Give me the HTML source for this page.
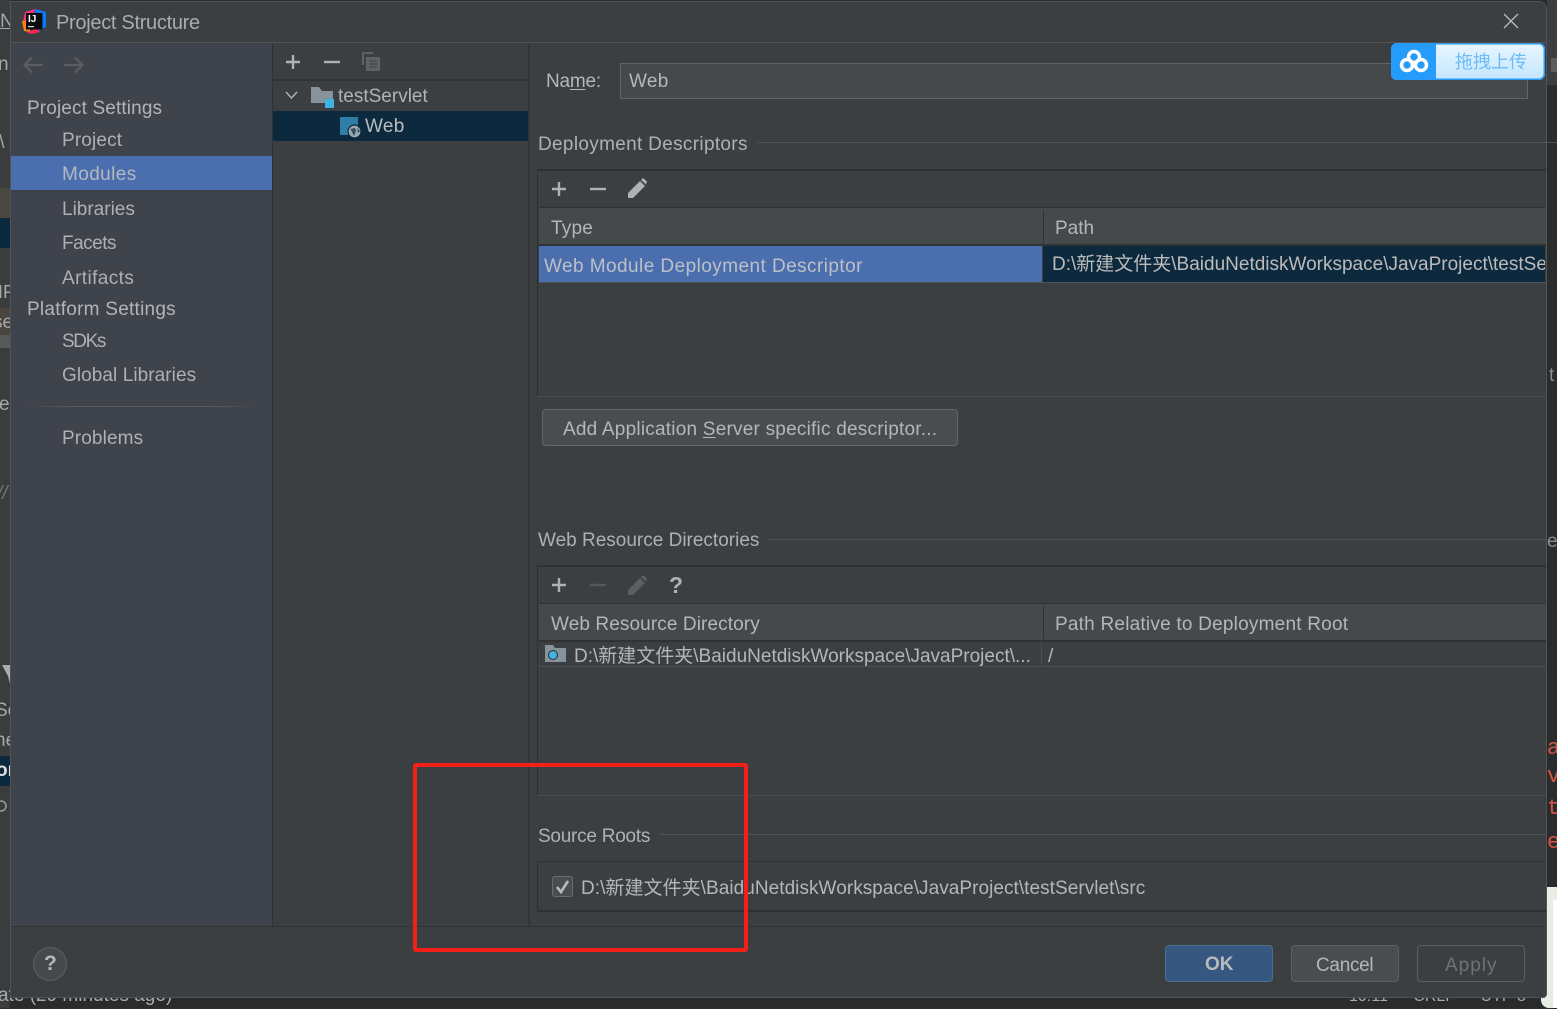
<!DOCTYPE html>
<html><head><meta charset="utf-8"><style>
html,body{margin:0;padding:0}
body{width:1557px;height:1008px;overflow:hidden;background:#2b2b2b;position:relative;font-family:"Liberation Sans","Noto Sans CJK SC",sans-serif;color:#bbb}
.a,.t{position:absolute}
.t{white-space:nowrap;font-size:19px;line-height:24px;color:#b4b6b8}
.c{width:10px;overflow:hidden;left:0;color:#a5a7a9}
svg{position:absolute;overflow:visible}
u{text-underline-offset:2px}
</style></head><body>
<div class="a" style="left:0;top:0;width:10px;height:1008px;background:#3a3c3e"></div>
<div class="a" style="left:0;top:188px;width:10px;height:30px;background:#4b463f"></div>
<div class="a" style="left:0;top:218px;width:10px;height:30px;background:#0d293e"></div>
<div class="a" style="left:0;top:308px;width:10px;height:30px;background:#4a453f"></div>
<div class="a" style="left:0;top:335px;width:10px;height:13px;background:#57595b"></div>
<div class="a" style="left:0;top:756px;width:10px;height:30px;background:#0d293e"></div>
<div class="t c" style="top:10px;text-decoration:underline">N</div>
<div class="t c" style="top:53px;text-indent:-2px">n</div>
<div class="t c" style="top:131px;text-indent:-6px">:\</div>
<div class="t c" style="top:280px;text-indent:-2px;font-size:18px">IF</div>
<div class="t c" style="top:311px;text-indent:-7px">se</div>
<div class="t c" style="top:393px;text-indent:-1px">e</div>
<div class="t c" style="top:482px;text-indent:-3px;font-style:italic;color:#777">//</div>
<svg style="left:0;top:664px" width="11" height="20"><path d="M2 1H10V20L8 12Z" fill="#a9abad"/></svg>
<div class="t c" style="top:699px;text-indent:-5px">Se</div>
<div class="t c" style="top:729px;text-indent:-5px">ne</div>
<div class="t c" style="top:759px;text-indent:-4px;font-weight:bold;color:#ddd">or</div>
<svg style="left:0;top:798px" width="10" height="16" fill="none"><circle cx="1" cy="8" r="5" stroke="#9a9c9e" stroke-width="1.500"/></svg>
<div class="t" style="left:-2px;top:984px;font-size:19px;color:#a9abae">ate (29 minutes ago)</div>
<div class="t" style="left:1349px;top:985px;font-size:16px;color:#a9abae;word-spacing:21px">10:11 CRLF UTF-8</div>

<div class="a" style="left:1547px;top:0;width:10px;height:1008px;background:#2a2b2c"></div>
<div class="a" style="left:1547px;top:0;width:10px;height:85px;background:#3c3f41"></div>
<div class="a" style="left:1551px;top:58px;width:6px;height:14px;background:#5b5d5f"></div>
<div class="a" style="left:1547px;top:142px;width:10px;height:1px;background:#4c4e50"></div>
<div class="t" style="left:1549px;top:364px;color:#8a8c8e">t</div>
<div class="t" style="left:1547px;top:530px;color:#8a8c8e">e</div>
<div class="t" style="left:1547px;top:737px;font:22px/24px 'Liberation Mono',monospace;color:#d9534a">a</div>
<div class="t" style="left:1547px;top:765px;font:22px/24px 'Liberation Mono',monospace;color:#d9534a">v</div>
<div class="t" style="left:1547px;top:797px;font:22px/24px 'Liberation Mono',monospace;color:#d9534a">t</div>
<div class="t" style="left:1547px;top:831px;font:22px/24px 'Liberation Mono',monospace;color:#d9534a">e</div>
<div class="a" style="left:1541px;top:887px;width:16px;height:121px;background:#e8ede6;border-radius:6px 0 0 8px"></div>
<div class="a" style="left:1553px;top:900px;width:4px;height:108px;background:#fff"></div>

<!-- dialog -->
<div class="a" style="left:10px;top:1px;width:1535px;height:995px;background:#3c3f41;border:1px solid #515355;border-radius:0 8px 4px 0"></div>
<div class="a" style="left:11px;top:42px;width:1535px;height:1px;background:#515355"></div>
<svg style="left:22px;top:8px" width="24" height="26" viewBox="0 0 24 26"><path d="M3 4 L13 1 L10 12 L1 14Z" fill="#f5317f"/><path d="M0 13 L8 12 L8 24 L2 23Z" fill="#fc801d"/><path d="M13 1 L24 4 L24 19 L14 24Z" fill="#087cfa"/><path d="M5 25 L14 20 L18 24 L10 26Z" fill="#fe2857"/><rect x="4" y="5" width="16.500" height="16.500" fill="#0b0b0b"/><text x="6" y="14" font-size="10" font-weight="bold" fill="#fff" font-family="Liberation Sans">IJ</text><rect x="6" y="18" width="6" height="1.200" fill="#ddd"/></svg>
<div class="t" style="left:56px;top:11px;font-size:20px;letter-spacing:-.3px;color:#a9abad">Project Structure</div>
<svg style="left:1503px;top:13px" width="16" height="16"><path d="M1 1L15 15M15 1L1 15" stroke="#bbb" stroke-width="1.3" fill="none"/></svg>

<!-- sidebar -->
<div class="a" style="left:11px;top:43px;width:261px;height:883px;background:#3f434c"></div>
<div class="a" style="left:272px;top:43px;width:1px;height:883px;background:#323232"></div>
<div class="a" style="left:528px;top:43px;width:2px;height:883px;background:#333537"></div>
<div class="a" style="left:273px;top:79px;width:255px;height:2px;background:#323232"></div>
<div class="a" style="left:11px;top:926px;width:1535px;height:1px;background:#303233"></div>
<svg style="left:23px;top:56px" width="70" height="18" fill="none" stroke="#5b5e60" stroke-width="2.2"><path d="M1 9H20M9 1.5L1.5 9L9 16.5"/><path d="M41 9H60M52 1.5L59.5 9L52 16.5"/></svg>
<div class="t" style="left:27px;top:97px;letter-spacing:.13px;color:#b2b4b6">Project Settings</div>
<div class="t" style="left:62px;top:129px;letter-spacing:.15px;color:#aeb0b2">Project</div>
<div class="a" style="left:11px;top:156px;width:261px;height:34px;background:#4b6eaf"></div>
<div class="t" style="left:62px;top:163px;letter-spacing:.4px;color:#b4b8c0">Modules</div>
<div class="t" style="left:62px;top:198px;color:#aeb0b2">Libraries</div>
<div class="t" style="left:62px;top:232px;letter-spacing:-.5px;color:#aeb0b2">Facets</div>
<div class="t" style="left:62px;top:267px;letter-spacing:.4px;color:#aeb0b2">Artifacts</div>
<div class="t" style="left:27px;top:298px;letter-spacing:.25px;color:#b2b4b6">Platform Settings</div>
<div class="t" style="left:62px;top:330px;letter-spacing:-1.4px;color:#aeb0b2">SDKs</div>
<div class="t" style="left:62px;top:364px;letter-spacing:.07px;color:#aeb0b2">Global Libraries</div>
<div class="a" style="left:27px;top:406px;width:230px;height:1px;background:linear-gradient(90deg,#3f434c,#5a5c5e 20%,#5a5c5e 80%,#3f434c)"></div>
<div class="t" style="left:62px;top:427px;letter-spacing:.12px;color:#aeb0b2">Problems</div>

<!-- tree -->
<svg style="left:285px;top:54px" width="105" height="18"><path d="M8 1V15M1 8H15" stroke="#afb1b3" stroke-width="2.4"/><path d="M39 8H55" stroke="#afb1b3" stroke-width="2.4"/><path d="M77 -2H88V0H79V11H77ZM81 3H95V17H81Z" fill="#5f6264"/><path d="M84 7H92M84 10H92M84 13H92" stroke="#3c3f41"/></svg>
<svg style="left:285px;top:91px" width="14" height="9" fill="none"><path d="M1 1L6.5 7L12 1" stroke="#a9abad" stroke-width="1.6"/></svg>
<svg style="left:311px;top:87px" width="24" height="22"><path d="M0 0H8L11 4H22V16H0Z" fill="#87939a"/><rect x="14" y="12" width="9" height="9" fill="#3fb2e3"/></svg>
<div class="t" style="left:338px;top:85px;color:#b0b2b4">testServlet</div>
<div class="a" style="left:273px;top:111px;width:255px;height:30px;background:#0d293e"></div>
<svg style="left:340px;top:117px" width="22" height="22"><rect width="18" height="18" fill="#2e7ea6"/><circle cx="14.500" cy="14.500" r="6.500" fill="#9aa7b0" stroke="#0d293e" stroke-width="1.200"/><path d="M10.500 12L15 11L16 14L14 19L12 15ZM17 11L20 14L18 16Z" fill="#33505f"/></svg>
<div class="t" style="left:365px;top:115px;letter-spacing:.3px;color:#b8bcc0">Web</div>

<!-- name -->
<div class="t" style="left:546px;top:70px;letter-spacing:-.2px">Na<u>m</u>e:</div>
<div class="a" style="left:620px;top:63px;width:906px;height:34px;background:#45494a;border:1px solid #646464"></div>
<div class="t" style="left:629px;top:70px;letter-spacing:.3px">Web</div>

<!-- deployment -->
<div class="t" style="left:538px;top:133px;letter-spacing:.32px;color:#aeb0b2">Deployment Descriptors</div>
<div class="a" style="left:757px;top:142px;width:789px;height:1px;background:#515355"></div>
<div class="a" style="left:537px;top:169px;width:1009px;height:228px;box-sizing:border-box;border:1px solid #2f3031;border-right:0;border-top-width:2px;border-bottom-color:#4a4c4e"></div>
<svg style="left:551px;top:178px" width="102" height="22"><path d="M8 4V18M1 11H15" stroke="#afb1b3" stroke-width="2.4"/><path d="M39 11H55" stroke="#afb1b3" stroke-width="2.4"/><path d="M77 20V15L89 3L94 8L82 20ZM90 2L92 0L96 3.500L95 6.500Z" fill="#afb1b3"/></svg>
<div class="a" style="left:539px;top:207px;width:1007px;height:1px;background:#2f3132"></div>
<div class="a" style="left:539px;top:208px;width:1007px;height:36px;background:#45494a"></div>
<div class="a" style="left:539px;top:244px;width:1007px;height:2px;background:#303234"></div>
<div class="a" style="left:1043px;top:210px;width:1px;height:33px;background:#323232"></div>
<div class="t" style="left:551px;top:217px;letter-spacing:.2px">Type</div>
<div class="t" style="left:1055px;top:217px">Path</div>
<div class="a" style="left:539px;top:246px;width:503px;height:36px;background:#4b6eaf"></div>
<div class="a" style="left:1043px;top:246px;width:502px;height:36px;background:#0d293e"></div>
<div class="a" style="left:539px;top:282px;width:1007px;height:1px;background:#515355"></div>
<div class="t" style="left:544px;top:255px;letter-spacing:.44px;color:#bcc0c6">Web Module Deployment Descriptor</div>
<div class="t" style="left:1052px;top:253px;width:493px;overflow:hidden;color:#bbb">D:\新建文件夹\BaiduNetdiskWorkspace\JavaProject\testServlet\web\WEB-INF\web.xml</div>
<div class="a" style="left:542px;top:409px;width:414px;height:35px;background:#4a4d4f;border:1px solid #646668;border-radius:4px"></div>
<div class="t" style="left:563px;top:418px;letter-spacing:.22px">Add Application <u>S</u>erver specific descriptor...</div>

<!-- web resource -->
<div class="t" style="left:538px;top:529px;color:#aeb0b2">Web Resource Directories</div>
<div class="a" style="left:768px;top:539px;width:778px;height:1px;background:#515355"></div>
<div class="a" style="left:537px;top:565px;width:1009px;height:231px;box-sizing:border-box;border:1px solid #2f3031;border-right:0;border-top-width:2px;border-bottom-color:#4a4c4e"></div>
<svg style="left:551px;top:575px" width="140" height="22"><path d="M8 3V17M1 10H15" stroke="#afb1b3" stroke-width="2.4"/><path d="M39 10H55" stroke="#55585a" stroke-width="2.4"/><path d="M77 20V15L89 3L94 8L82 20ZM90 2L92 0L96 3.500L95 6.500Z" fill="#5c5f61"/></svg>
<div class="t" style="left:669px;top:573px;font-size:23px;font-weight:bold;color:#afb1b3">?</div>
<div class="a" style="left:539px;top:603px;width:1007px;height:1px;background:#2f3132"></div>
<div class="a" style="left:539px;top:604px;width:1007px;height:36px;background:#45494a"></div>
<div class="a" style="left:539px;top:640px;width:1007px;height:2px;background:#303234"></div>
<div class="a" style="left:1043px;top:606px;width:1px;height:33px;background:#323232"></div>
<div class="t" style="left:551px;top:613px;letter-spacing:.1px">Web Resource Directory</div>
<div class="t" style="left:1055px;top:613px;letter-spacing:.22px">Path Relative to Deployment Root</div>
<div class="a" style="left:1041px;top:642px;width:1px;height:24px;background:#4a4d4f"></div>
<div class="a" style="left:539px;top:666px;width:1007px;height:1px;background:#4d5052"></div>
<svg style="left:545px;top:645px" width="22" height="18"><path d="M0 0H8L10 3H21V17H0Z" fill="#87939a"/><circle cx="8" cy="10" r="4.500" fill="#3fb2e3" stroke="#2b2d2f"/></svg>
<div class="t" style="left:574px;top:645px;width:456px;overflow:hidden">D:\新建文件夹\BaiduNetdiskWorkspace\JavaProject\...</div>
<div class="t" style="left:1048px;top:645px">/</div>

<!-- source roots -->
<div class="t" style="left:538px;top:825px;letter-spacing:-.25px;color:#aeb0b2">Source Roots</div>
<div class="a" style="left:660px;top:834px;width:886px;height:1px;background:#515355"></div>
<div class="a" style="left:537px;top:861px;width:1009px;height:51px;box-sizing:border-box;border:1px solid #2f3031;border-right:0;border-bottom-width:2px"></div>
<div class="a" style="left:552px;top:876px;width:19px;height:19px;background:#4a4d4f;border:1px solid #6b6b6b;border-radius:3px"></div>
<svg style="left:555px;top:879px" width="16" height="16" fill="none"><path d="M2 8L6 13L13 2" stroke="#b8babc" stroke-width="2.6"/></svg>
<div class="t" style="left:581px;top:877px;letter-spacing:.05px">D:\新建文件夹\BaiduNetdiskWorkspace\JavaProject\testServlet\src</div>

<!-- footer -->
<div class="a" style="left:33px;top:947px;width:32px;height:32px;background:#46494b;border:1px solid #5e6060;border-radius:50%"></div>
<div class="t" style="left:44px;top:952px;font-size:21px;font-weight:bold;color:#b4b6b8">?</div>
<div class="a" style="left:1165px;top:945px;width:106px;height:35px;background:#365880;border:1px solid #4c708c;border-radius:4px"></div>
<div class="t" style="left:1205px;top:953px;font-weight:bold;color:#b8babc">OK</div>
<div class="a" style="left:1291px;top:945px;width:106px;height:35px;background:#4a4d4f;border:1px solid #5e6060;border-radius:4px"></div>
<div class="t" style="left:1316px;top:954px;letter-spacing:-.3px">Cancel</div>
<div class="a" style="left:1417px;top:945px;width:106px;height:35px;border:1px solid #5e6060;border-radius:4px"></div>
<div class="t" style="left:1445px;top:954px;letter-spacing:1px;color:#6f7173">Apply</div>

<!-- red box -->
<div class="a" style="left:413px;top:763px;width:327px;height:181px;border:4px solid #f3201a;border-radius:3px"></div>

<!-- baidu -->
<div class="a" style="left:1391px;top:43px;width:154px;height:37px;border-radius:6px;background:linear-gradient(#e8f6ff,#c4e6ff);box-shadow:inset 0 0 0 1.500px #259cfb;overflow:hidden"><div style="width:45px;height:37px;background:#259cfb"></div></div>
<svg style="left:1399px;top:48px" width="30" height="26" fill="none" stroke="#fff" stroke-width="3.500"><circle cx="15" cy="9" r="5.500"/><circle cx="8" cy="17" r="5.500"/><circle cx="22" cy="17" r="5.500"/></svg>
<div class="t" style="left:1455px;top:50px;font-size:18px;color:#6cbcf8">拖拽上传</div>
</body></html>
